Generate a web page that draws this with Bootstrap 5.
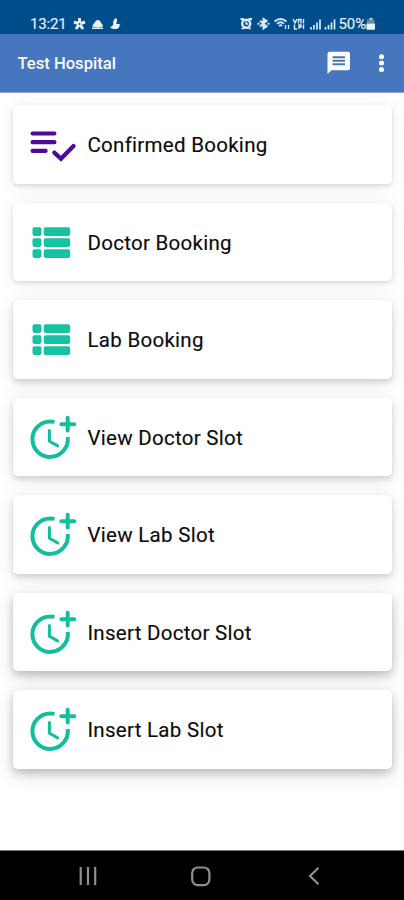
<!DOCTYPE html>
<html lang="en">
<head>
<meta charset="utf-8">
<meta name="viewport" content="width=device-width, initial-scale=1">
<title>Test Hospital</title>
<link href="https://cdn.jsdelivr.net/npm/bootstrap@5.3.0/dist/css/bootstrap.min.css" rel="stylesheet">
<style>
body{font-family:Roboto,"Liberation Sans",sans-serif;background:#fff;color:#0c0c0c;height:900px;overflow:hidden}
svg{display:block;flex:none}
.status-bar{height:34px;background:#004d8c;color:#e6f1f8;padding:14px 28px 0 30px;font-size:15px;line-height:20px;-webkit-text-stroke:.15px #e6f1f8}
.status-bar span{letter-spacing:-.15px}
.app-bar{height:59px;background:#4676be;border-bottom:1px solid #88a6d6;padding:0 17px 0 17.5px}
.app-title{font-size:16.6px;font-weight:500;line-height:24px;padding-top:2px;color:#f8fbff}
.menu-list{padding:12px 12px 0 13px;gap:19px;background:#fff}
.menu-card{height:78.5px;border:0;border-radius:5px;padding-left:15px;font-size:20.5px;letter-spacing:.28px;line-height:28px;color:#0c0c0c}
.menu-card svg{margin-right:9.500px}
.menu-card span{padding-top:2px;-webkit-text-stroke:.15px #0c0c0c}
.lift-1{box-shadow:0 2px 5px rgba(0,0,0,.12),0 2px 18px rgba(0,0,0,.07)}
.lift-2{box-shadow:0 3px 6px rgba(0,0,0,.15),0 4px 20px rgba(0,0,0,.09)}
.lift-3{box-shadow:0 4px 8px rgba(0,0,0,.2),0 6px 22px rgba(0,0,0,.12)}
.nav-keys{height:50px;background:#000;border-top:1px solid #777}
</style>
<script src="https://cdn.jsdelivr.net/npm/bootstrap@5.3.0/dist/js/bootstrap.bundle.min.js"></script>
</head>
<body class="d-flex flex-column">
<svg width="0" height="0" class="position-absolute">
<defs>
<symbol id="check-list" viewBox="0 0 50 50"><g fill="none" stroke="#50089a" stroke-width="4.2" stroke-linecap="round" stroke-linejoin="miter"><path d="M4.600 14.500h21.800M4.600 23.200h21.800M4.600 31.900h13"/><path d="M26.300 33.600l6.700 6.200 12.500-12.800"/></g></symbol>
<symbol id="rows" viewBox="0 0 50 50"><g fill="#16c2a1"><rect x="4.5" y="10.2" width="9" height="8.7" rx="1.8"/><rect x="15.7" y="10.2" width="26.5" height="8.7" rx="1.8"/><rect x="4.5" y="21.2" width="9" height="8.7" rx="1.8"/><rect x="15.7" y="21.2" width="26.5" height="8.7" rx="1.8"/><rect x="4.5" y="32.2" width="9" height="8.7" rx="1.8"/><rect x="15.7" y="32.2" width="26.5" height="8.7" rx="1.8"/></g></symbol>
<symbol id="clock-plus" viewBox="0 0 50 50"><g fill="none" stroke="#14bd9e" stroke-width="4"><path d="M26.500 9.900Q24 9.500 22.200 9.500A17.700 17.700 0 1 0 39.700 25"/><path d="M39.700 5.800v12.800M33.300 12.200h13" stroke-width="4" stroke-linecap="round"/><path d="M21.400 18.500v10.700l8.200 4.700" stroke-width="3" stroke-linecap="round"/></g></symbol>
</defs>
</svg>

<div class="status-bar d-flex justify-content-between">
  <div class="d-flex">
    <span>13:21</span>
    <svg width="54" height="20" viewBox="0 0 54 20" fill="#e6f1f8">
      <path d="M12.500 4v6L7 8M12.500 10l5.500-2M12.500 10l-3.500 5M12.500 10l3.500 5" stroke="#e6f1f8" stroke-width="3" fill="none"/><circle cx="12.500" cy="10" r="1" fill="#004d8c"/>
      <path d="M25 12.500q1-2 3-4.500 1-2.500 3.500-2 2 .5 2.500 3 2 1 2 3.500-5 1.500-11 0zM25 13.500h11v1.500H25z"/>
      <path d="M49 4q1.500 .5 1 3.500l-.8 2.500h3.500v1.500q-.7 3.500-4 3.500-5 0-5.500-2 3-1 3-3.500-.5-3.500 2.800-5.500z"/>
    </svg>
  </div>
  <div class="d-flex">
    <svg width="99" height="20" viewBox="0 0 99 20" fill="none" stroke="#dcebf5">
      <path d="M.500 5.200h3.500M8.500 5.200h3.500" stroke-width="2.200"/><circle cx="6.200" cy="9.700" r="4" stroke-width="2.400"/><path d="M6.200 7.500v2.500h2M1.500 14.500h2.500M8.500 14.500h2.500" stroke-width="1.600"/>
      <path d="M20 6.800l6.500 5.700-3 2V5l3 1.800-6.500 5.700M17.500 9.700h2M27.500 9.700h2" stroke-width="2"/>
      <path d="M34.500 7.500q6-5 12 0M37 9.800q3.700-3 7 0M39 12q1.700-1.500 3 0" stroke-width="1.800"/><path d="M45.500 11v4M48.500 11v4" stroke-width="1.300"/>
      <path d="M53 5l2 4 2-4M58.500 9.500V5.500h2.500v4M63.500 5v4.500M54.500 10.500v4.500h2.500M59 15v-4h2v2h-2M63.500 10.500v4.500" stroke-width="1.400"/>
      <path d="M71 13v2.500M74 11v4.500M77 8.500v7M80 5.500v10M85.500 13v2.500M88.500 11v4.500M91.500 8.500v7M94.500 5.500v10" stroke-width="1.700"/>
    </svg>
    <span>50%</span>
    <svg width="10" height="20" viewBox="0 0 10 20" fill="#e9f3fa"><path d="M3.500 4h3v1.500h-3zM.500 9.500h8.500V15q0 .8-1 .8H1.500q-1 0-1-.8z"/><path d="M1 5.500h7.500v4H1z" opacity=".4"/></svg>
  </div>
</div>

<header class="app-bar d-flex align-items-center justify-content-between">
  <div class="app-title">Test Hospital</div>
  <div class="d-flex align-items-center">
    <svg width="24" height="24" viewBox="0 0 24 24"><path fill="#fff" d="M2.500 .800h18.500a2 2 0 0 1 2 2v14.500a2 2 0 0 1-2 2H4.500L.500 23V2.800a2 2 0 0 1 2-2z"/><path d="M5.500 6.200h12.500M5.500 9.800h12.500M5.500 13.200h12.500" stroke="#4676be" stroke-width="1.900"/></svg>
    <svg width="12" height="24" viewBox="0 0 12 24" fill="#fff" class="ms-4"><circle cx="6.500" cy="5.700" r="2.500"/><circle cx="6.500" cy="12" r="2.500"/><circle cx="6.500" cy="18.500" r="2.500"/></svg>
  </div>
</header>

<main class="menu-list d-flex flex-column flex-grow-1">
  <a class="menu-card card lift-1 flex-row align-items-center text-decoration-none" href="#"><svg width="50" height="50"><use href="#check-list"/></svg><span>Confirmed Booking</span></a>
  <a class="menu-card card lift-1 flex-row align-items-center text-decoration-none" href="#"><svg width="50" height="50"><use href="#rows"/></svg><span>Doctor Booking</span></a>
  <a class="menu-card card lift-2 flex-row align-items-center text-decoration-none" href="#"><svg width="50" height="50"><use href="#rows"/></svg><span>Lab Booking</span></a>
  <a class="menu-card card lift-2 flex-row align-items-center text-decoration-none" href="#"><svg width="50" height="50"><use href="#clock-plus"/></svg><span>View Doctor Slot</span></a>
  <a class="menu-card card lift-2 flex-row align-items-center text-decoration-none" href="#"><svg width="50" height="50"><use href="#clock-plus"/></svg><span>View Lab Slot</span></a>
  <a class="menu-card card lift-3 flex-row align-items-center text-decoration-none" href="#"><svg width="50" height="50"><use href="#clock-plus"/></svg><span>Insert Doctor Slot</span></a>
  <a class="menu-card card lift-3 flex-row align-items-center text-decoration-none" href="#"><svg width="50" height="50"><use href="#clock-plus"/></svg><span>Insert Lab Slot</span></a>
</main>

<footer class="nav-keys">
  <svg width="404" height="49" viewBox="0 0 404 49" fill="none" stroke="#8f8f8f" stroke-width="2.200"><path d="M80.700 16v18M88 16v18M95.200 16v18"/><rect x="192.200" y="16.500" width="17.200" height="17.600" rx="5.500"/><path d="M318.500 16.800l-8.500 8.200 8.500 8.200"/></svg>
</footer>
</body>
</html>
